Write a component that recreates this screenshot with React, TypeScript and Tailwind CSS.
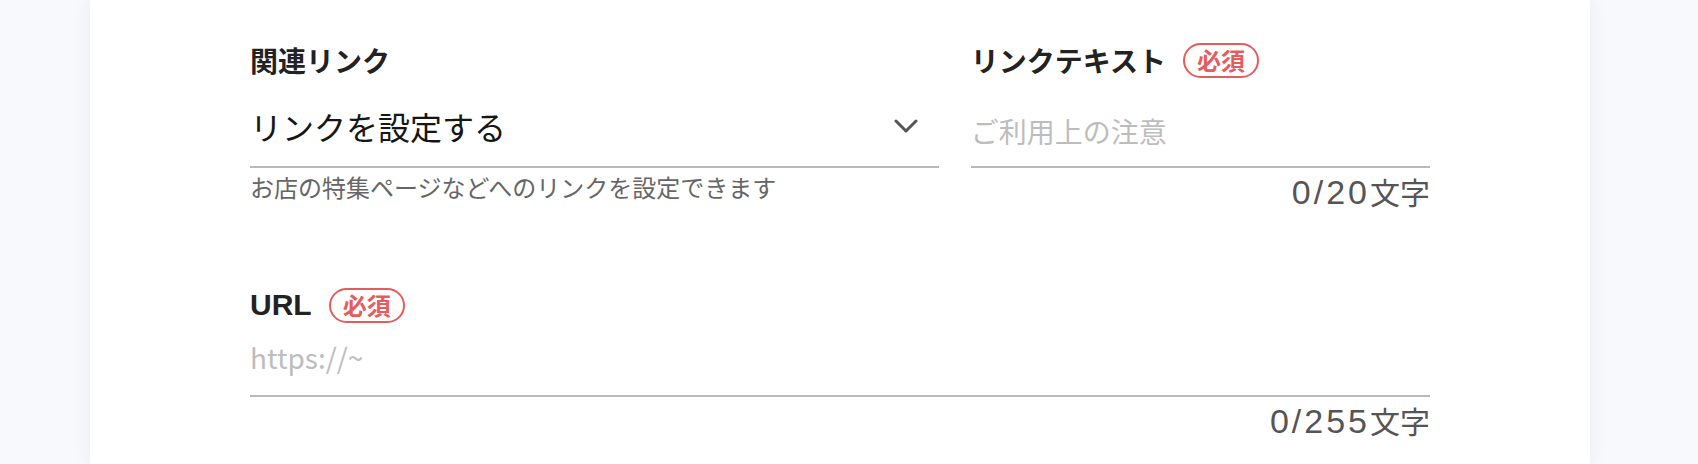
import React from 'react';

const font = { fontFamily: '"Noto Sans CJK JP", "Noto Sans", sans-serif' };
const latin = { fontFamily: '"Liberation Sans", "Noto Sans CJK JP", sans-serif' };

function Required() {
  return (
    <span className="inline-flex h-[35px] w-[76px] items-center justify-center rounded-full border-2 border-[#e65c5c] text-[24px] font-bold leading-none text-[#e65c5c]">
      必須
    </span>
  );
}

function Label({ text, required, latinText }: { text: string; required?: boolean; latinText?: boolean }) {
  return (
    <div className="flex h-[36px] items-center gap-[17px]">
      {latinText ? (
        <span className="text-[30px] font-bold leading-none text-[#222]" style={latin}>{text}</span>
      ) : (
        <span className="text-[28px] font-bold leading-none text-[#222]">{text}</span>
      )}
      {required && <Required />}
    </div>
  );
}

function Counter({ count }: { count: string }) {
  return (
    <p className="flex items-baseline justify-end leading-[36px] text-[#555]">
      <span className="text-[34px] tracking-[3px]" style={latin}>{count}</span>
      <span className="text-[30px]">文字</span>
    </p>
  );
}

export default function App() {
  return (
    <div className="h-[464px] overflow-hidden bg-[#f8f9fc] pl-[90px] pr-[108px]" style={font}>
      <div className="h-full bg-white px-[160px] pt-[42px] shadow-[0_0_18px_rgba(30,40,80,0.07)]">
        <div className="flex gap-[32px]">
          {/* 関連リンク */}
          <div className="flex flex-[3] flex-col">
            <Label text="関連リンク" />
            <div className="mt-[28px] flex items-center justify-between border-b-2 border-[#b8b8b8] pb-[20px] pr-[21px]">
              <span className="text-[32px] leading-[40px] text-[#161616]">リンクを設定する</span>
              <svg width="24" height="14" viewBox="0 0 24 14" fill="none">
                <path d="M2 2l10 10 10-10" stroke="#555" strokeWidth="3" strokeLinecap="round" strokeLinejoin="round" />
              </svg>
            </div>
            <p className="mt-[3px] text-[24px] leading-[32px] text-[#666]">
              お店の特集ページなどへのリンクを設定できます
            </p>
          </div>

          {/* リンクテキスト */}
          <div className="flex flex-[2] flex-col">
            <Label text="リンクテキスト" required />
            <div className="mt-[33px] border-b-2 border-[#b8b8b8] pb-[15px]">
              <span className="text-[28px] leading-[40px] text-[#bdbdbd]">ご利用上の注意</span>
            </div>
            <div className="mt-[5px]">
              <Counter count="0/20" />
            </div>
          </div>
        </div>

        {/* URL */}
        <div className="mt-[77px] flex flex-col">
          <Label text="URL" required latinText />
          <div className="mt-[14px] border-b-2 border-[#b8b8b8] pb-[18px]">
            <span className="text-[28px] leading-[40px] text-[#bdbdbd]">https://~</span>
          </div>
          <div className="mt-[5px]">
            <Counter count="0/255" />
          </div>
        </div>
      </div>
    </div>
  );
}
